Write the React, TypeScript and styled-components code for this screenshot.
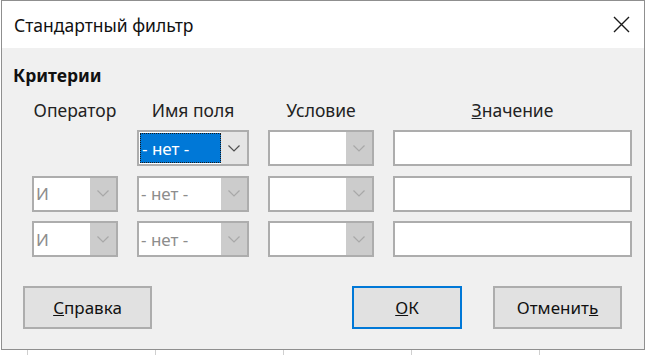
import * as React from "react";
import styled, { createGlobalStyle } from "styled-components";

const GlobalStyle = createGlobalStyle`
  html, body {
    margin: 0;
    padding: 0;
    background-color: #ffffff;
    background-image: repeating-linear-gradient(
      to right,
      transparent 0,
      transparent 27px,
      #cfcfcf 27px,
      #cfcfcf 28px,
      transparent 28px,
      transparent 128px
    );
    font-family: "Noto Sans", "Open Sans", sans-serif;
    color: #000;
  }
`;

const Window = styled.div`
  box-sizing: border-box;
  width: 644px;
  height: 350px;
  margin-left: 1px;
  border: 1px solid #8f8f8f;
  background: #f0f0f0;
  display: flex;
  flex-direction: column;
`;

const TitleBar = styled.div`
  height: 47px;
  background: #ffffff;
  display: flex;
  align-items: center;
  justify-content: space-between;
  padding: 0 12px 0 12px;
  flex-shrink: 0;
`;

const Title = styled.div`
  font-size: 17.5px;
  color: #111;
`;

const CloseButton = styled.div`
  width: 22px;
  height: 22px;
  display: flex;
  align-items: center;
  justify-content: center;
`;

const Body = styled.div`
  flex: 1;
  display: flex;
  flex-direction: column;
  padding: 17px 22px 0 11px;
`;

const SectionLabel = styled.div`
  font-size: 17.5px;
  font-weight: 700;
  line-height: 20px;
  color: #111;
`;

const Grid = styled.div`
  display: grid;
  grid-template-columns: 86px 112px 106px 239px;
  column-gap: 19px;
  row-gap: 9.5px;
  margin: 15px 0 0 19px;
`;

const Header = styled.div`
  text-align: center;
  font-size: 17.5px;
  line-height: 20px;
  color: #222;
  margin-bottom: 0.5px;
`;

const Empty = styled.div``;

const ComboBox = styled.div`
  box-sizing: border-box;
  height: 36px;
  border: 2px solid #adadad;
  background: #ffffff;
  display: flex;
  align-items: stretch;
`;

const ComboText = styled.div<{ $focused?: boolean; $disabled?: boolean }>`
  flex: 1;
  display: flex;
  align-items: center;
  padding-left: 2px;
  font-size: 17px;
  color: ${(p) => (p.$focused ? "#ffffff" : p.$disabled ? "#8d8d8d" : "#000")};
  background: ${(p) => (p.$focused ? "#0078d7" : "transparent")};
  outline: ${(p) => (p.$focused ? "1px dotted #1a1a1a" : "none")};
  outline-offset: -1px;
  margin: ${(p) => (p.$focused ? "1px 0 1px 1px" : "0")};
`;

const ArrowButton = styled.div<{ $disabled?: boolean }>`
  width: 26px;
  display: flex;
  align-items: center;
  justify-content: center;
  background: ${(p) => (p.$disabled ? "#cccccc" : "#e5e5e5")};
`;

const TextField = styled.div`
  box-sizing: border-box;
  height: 36px;
  border: 2px solid #adadad;
  background: #ffffff;
`;

const ButtonRow = styled.div`
  display: flex;
  align-items: center;
  margin: 29px 0 0 10px;
`;

const Button = styled.div<{ $default?: boolean; $width: number }>`
  box-sizing: border-box;
  width: ${(p) => p.$width}px;
  height: 43px;
  border: 2px solid ${(p) => (p.$default ? "#0078d7" : "#adadad")};
  background: #e1e1e1;
  display: flex;
  align-items: center;
  justify-content: center;
  font-size: 17px;
  color: #111;
`;

const Spacer = styled.div`
  flex: 1;
`;

const ButtonGap = styled.div`
  width: 31px;
`;

const Chevron = ({ disabled }: { disabled?: boolean }) => (
  <svg width="12" height="7" viewBox="0 0 12 7">
    <polyline
      points="0.5,0.5 6,6 11.5,0.5"
      fill="none"
      stroke={disabled ? "#a8a8a8" : "#505050"}
      strokeWidth="1.2"
    />
  </svg>
);

const Combo = ({
  text,
  focused,
  disabled,
}: {
  text?: string;
  focused?: boolean;
  disabled?: boolean;
}) => (
  <ComboBox>
    <ComboText $focused={focused} $disabled={disabled}>
      {text}
    </ComboText>
    <ArrowButton $disabled={disabled}>
      <Chevron disabled={disabled} />
    </ArrowButton>
  </ComboBox>
);

export default function App() {
  return (
    <>
      <GlobalStyle />
      <Window>
        <TitleBar>
          <Title>Стандартный фильтр</Title>
          <CloseButton>
            <svg width="17" height="17" viewBox="0 0 17 17">
              <path d="M1 1 L16 16 M16 1 L1 16" stroke="#1a1a1a" strokeWidth="1.4" />
            </svg>
          </CloseButton>
        </TitleBar>
        <Body>
          <SectionLabel>Критерии</SectionLabel>
          <Grid>
            <Header>Оператор</Header>
            <Header>Имя поля</Header>
            <Header>Условие</Header>
            <Header>
              <u>З</u>начение
            </Header>

            <Empty />
            <Combo text="- нет -" focused />
            <Combo disabled />
            <TextField />

            <Combo text="И" disabled />
            <Combo text="- нет -" disabled />
            <Combo disabled />
            <TextField />

            <Combo text="И" disabled />
            <Combo text="- нет -" disabled />
            <Combo disabled />
            <TextField />
          </Grid>
          <ButtonRow>
            <Button $width={129}>
              <span>
                <u>С</u>правка
              </span>
            </Button>
            <Spacer />
            <Button $width={110} $default>
              <span>
                <u>О</u>К
              </span>
            </Button>
            <ButtonGap />
            <Button $width={129}>
              <span>
                Отменит<u>ь</u>
              </span>
            </Button>
          </ButtonRow>
        </Body>
      </Window>
    </>
  );
}
